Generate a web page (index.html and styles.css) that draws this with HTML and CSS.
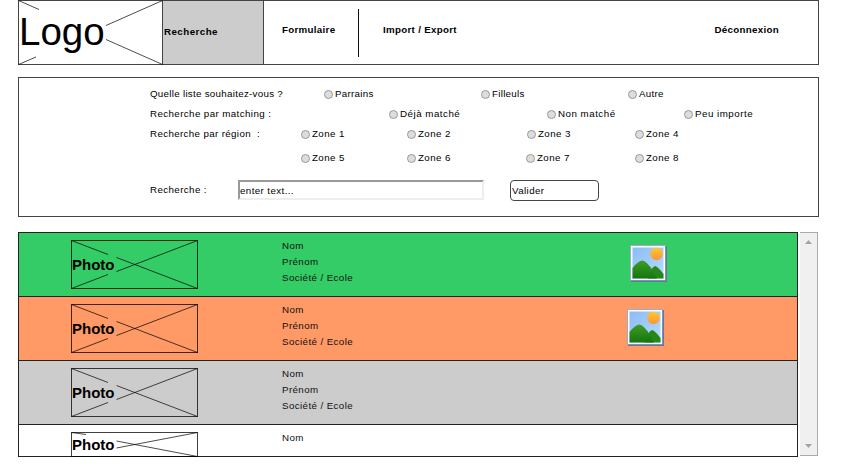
FILE: index.html
```html
<!DOCTYPE html>
<html lang="fr">
<head>
<meta charset="utf-8">
<title>Recherche</title>
<link rel="stylesheet" href="styles.css">
</head>
<body>
<svg class="defs" width="0" height="0">
  <defs>
    <linearGradient id="sky" x1="0" y1="0" x2="1" y2="1"><stop offset="0" stop-color="#8cbcf5"/><stop offset="1" stop-color="#b5dcff"/></linearGradient>
    <linearGradient id="hill" x1="0" y1="0" x2="0" y2="1"><stop offset="0" stop-color="#3f9d24"/><stop offset="1" stop-color="#147510"/></linearGradient>
    <linearGradient id="sun" x1="0" y1="0" x2="0" y2="1"><stop offset="0" stop-color="#ffc72c"/><stop offset="1" stop-color="#fb963a"/></linearGradient>
    <symbol id="picture" viewBox="0 0 37 37">
      <path d="M1 1H37V37H1Z" fill="#62789d"/>
      <path d="M0 0H35.500V35.500H0Z" fill="#9baec8"/>
      <path d="M1 1H35V35H1Z" fill="#fff"/>
      <path d="M2.500 2.500H33.500V33.500H2.500Z" fill="url(#sky)"/>
      <circle cx="26.500" cy="9" r="6.200" fill="url(#sun)"/>
      <path d="M20 27Q23 21 25.500 21Q29 23 33.500 29V33.500H18Z" fill="#248718"/>
      <path d="M2.500 23Q8 16 12 15.500Q17 16 23 26L27 33.500H2.500Z" fill="url(#hill)"/>
    </symbol>
    <symbol id="cross" viewBox="0 0 127 49">
      <path class="line" d="M.5 .5L37 14.500M45.500 17.500L126.500 48.500M.5 48.500L37 34.500M45.500 31.500L126.500 .5"/>
    </symbol>
  </defs>
</svg>
<header class="topbar">
  <div class="logo">
    <svg class="backdrop" viewBox="0 0 145 65"><path class="line" d="M.5 .5L21 9.500M88 25.500L144.500 .5M.5 64.500L18 57M88 39.500L144.500 64.500"/></svg>
    <span>Logo</span>
  </div>
  <nav class="nav">
    <a class="tab active">Recherche</a>
    <a class="tab form">Formulaire</a>
    <a class="tab io">Import / Export</a>
    <a class="tab logout">Déconnexion</a>
  </nav>
</header>
<form class="filters">
  <div class="row list"><span class="caption">Quelle liste souhaitez-vous ?</span><label><i></i>Parrains</label><label><i></i>Filleuls</label><label><i></i>Autre</label></div>
  <div class="row matching"><span class="caption">Recherche par matching :</span><label><i></i>Déjà matché</label><label><i></i>Non matché</label><label><i></i>Peu importe</label></div>
  <div class="row zone"><span class="caption">Recherche par région &nbsp;:</span><label><i></i>Zone 1</label><label><i></i>Zone 2</label><label><i></i>Zone 3</label><label><i></i>Zone 4</label></div>
  <div class="row zone lower"><span></span><label><i></i>Zone 5</label><label><i></i>Zone 6</label><label><i></i>Zone 7</label><label><i></i>Zone 8</label></div>
  <div class="row search"><span class="caption">Recherche :</span><div class="field">enter text...</div><div class="submit">Valider</div></div>
</form>
<main class="results">
  <div class="cards">
    <article class="card green">
      <div class="photo"><svg class="backdrop"><use href="#cross"/></svg><b>Photo</b></div>
      <div class="info"><p>Nom</p><p>Prénom</p><p>Société / Ecole</p></div>
      <svg class="picture"><use href="#picture"/></svg>
    </article>
    <article class="card orange">
      <div class="photo"><svg class="backdrop"><use href="#cross"/></svg><b>Photo</b></div>
      <div class="info"><p>Nom</p><p>Prénom</p><p>Société / Ecole</p></div>
      <svg class="picture"><use href="#picture"/></svg>
    </article>
    <article class="card grey">
      <div class="photo"><svg class="backdrop"><use href="#cross"/></svg><b>Photo</b></div>
      <div class="info"><p>Nom</p><p>Prénom</p><p>Société / Ecole</p></div>
    </article>
    <article class="card cut">
      <div class="photo"><svg class="backdrop" viewBox="0 0 127 25"><path class="line" d="M.5 .5L15 2.500M45.500 9L126.500 24.500M45.500 16L126.500 .5"/></svg><b>Photo</b></div>
      <div class="info"><p>Nom</p></div>
    </article>
  </div>
  <div class="scrollbar">
    <svg width="7" height="4" viewBox="0 0 7 4"><path d="M0 4L3.500 0L7 4Z" fill="#a3a3a3"/></svg>
    <svg width="7" height="4" viewBox="0 0 7 4"><path d="M0 0L3.500 4L7 0Z" fill="#a3a3a3"/></svg>
  </div>
</main>
</body>
</html>
```
FILE: styles.css
```css
* { box-sizing: border-box; }
body {
  margin: 0;
  padding-left: 18px;
  width: 819px;
  background: #fff;
  color: #000;
  font: 9.75px/16px "Liberation Sans", Arial, sans-serif;
  letter-spacing: .4px;
  white-space: nowrap;
}
p { margin: 0; }
.defs { position: absolute; }
.line { fill: none; stroke: #000; stroke-opacity: .7; stroke-width: 1; }
.backdrop { position: absolute; inset: -1px; width: calc(100% + 2px); height: calc(100% + 2px); }

.topbar { display: flex; height: 65px; border: 1px solid #444; }
.logo { position: relative; width: 143px; }
.logo span { position: relative; display: block; padding-top: 9px; font-size: 38.5px; line-height: 44px; letter-spacing: 0; }
.nav { display: flex; flex: 1; }
.tab { font-weight: bold; line-height: 16px; padding-top: 21px; letter-spacing: .3px; }
.active { width: 102px; padding: 23px 0 0 1px; letter-spacing: .45px; background: #ccc; border: 1px solid #444; border-width: 0 1px; }
.form { width: 95px; height: 48px; margin-top: 8px; padding: 13px 0 0 18px; border-right: 1px solid #111; }
.io { padding-left: 24px; }
.logout { margin-left: auto; padding-right: 39px; }

.filters { height: 140px; margin-top: 12px; padding: 6px 0 0 131px; border: 1px solid #444; }
.row { display: grid; height: 20px; align-items: center; }
.row.list { grid-template-columns: 174px 157px 147px 1fr; letter-spacing: .29px; }
.row.matching { grid-template-columns: 239px 158px 137px 1fr; letter-spacing: .5px; }
.row.zone { grid-template-columns: 151px 106px 120px 108px 1fr; }
.row.lower { margin-top: 4px; grid-template-columns: 151px 106px 119px 109px 1fr; }
.row.search { margin-top: 12px; height: 21px; grid-template-columns: 88px 246px 115px; }
.matching .caption { letter-spacing: .4px; }
.zone .caption { letter-spacing: .36px; }
.search .caption { align-self: start; padding-top: 2px; }
label { display: flex; align-items: center; gap: 2px; }
label i { width: 9px; height: 9px; border: 1px solid #999; border-radius: 50%; background: #ddd; }
.field { height: 20px; align-self: start; line-height: 18px; border: 2px solid; border-color: #999 #eee #eee #999; }
.submit { width: 89px; height: 21px; margin-left: 26px; padding: 2px 0 0 1px; line-height: 16px; border: 1px solid #444; border-radius: 4px; }

.results { display: flex; width: 800px; height: 225px; margin-top: 15px; }
.cards { width: 780px; border: 1px solid #222; }
.card { display: flex; height: 64px; padding: 7px 0 0 52px; border-bottom: 1px solid #222; }
.green { background: #3c6; }
.orange { background: #f96; }
.grey { background: #ccc; }
.cut { height: 31px; border: 0; }
.photo { position: relative; width: 127px; height: 49px; border: 1px solid rgba(0, 0, 0, .75); }
.photo b { position: relative; display: block; margin-top: 15px; font-size: 15px; line-height: 18px; letter-spacing: 0; }
.cut .photo { height: 25px; }
.cut b { margin-top: 3px; }
.info { width: 347px; margin: -2px 0 0 84px; color: #111; }
.picture { width: 37px; height: 37px; margin: 5px 0 0 1px; }
.orange .picture { margin-left: -2px; }
.scrollbar {
  display: flex; flex-direction: column; justify-content: space-between; align-items: center;
  width: 18px; height: 224px; margin-left: 2px; padding: 7px 0 7px;
  background: #f0f0f0; border: 1px solid #aaa; border-left: 0;
}
```
